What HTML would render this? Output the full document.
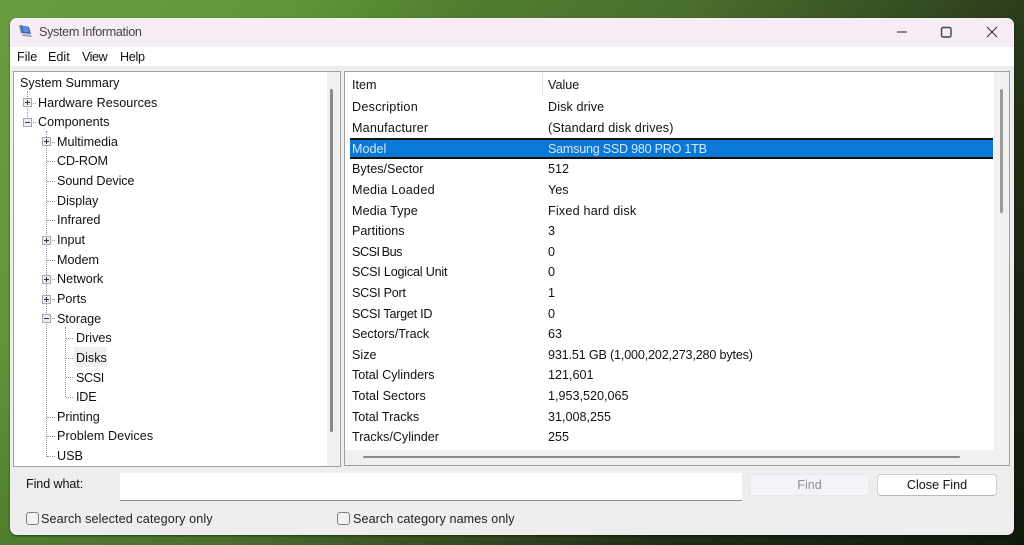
<!DOCTYPE html>
<html><head><meta charset="utf-8"><style>
html,body{margin:0;padding:0;width:1024px;height:545px;overflow:hidden}
body{position:relative;background:linear-gradient(131deg,#689e40 0%,#609538 20%,#4f7d2e 32%,#4a6f2e 46%,#2b3f1c 68%,#1f2d14 76%,#0f1a0c 100%);font-family:"Liberation Sans",sans-serif;font-size:12.6px;color:#111}
.a{position:absolute;white-space:nowrap}
.t{position:absolute;white-space:nowrap;line-height:16px;height:16px}
.hv{position:absolute;border-left:1px dotted #999;width:0}
.hh{position:absolute;border-top:1px dotted #999;height:0}
.ex{position:absolute;width:9px;height:9px;border:1px solid #a8a8b0;background:#eceef4;box-sizing:border-box}
.ex:before{content:"";position:absolute;left:1px;top:3px;width:5px;height:1px;background:#334}
.ex.p:after{content:"";position:absolute;left:3px;top:1px;width:1px;height:5px;background:#334}
.cb{position:absolute;width:13px;height:13px;border:1px solid #808080;border-radius:3px;background:#f3f3f3;box-sizing:border-box}
</style></head><body>
<div class="a" style="left:10px;top:18px;width:1004px;height:517px;background:#eeeeee;border-radius:7px;overflow:hidden;box-shadow:0 1px 2px rgba(0,0,0,.5)">
<div class="a" style="left:0;top:0;width:1004px;height:29px;background:#f6ecf6"></div>
<div class="a" style="left:0;top:29px;width:1004px;height:19px;background:#fff"></div>
</div>
<svg class="a" style="left:18px;top:23px" width="16" height="16" viewBox="0 0 16 16"><path d="M2 2l9 2 2 7-9-1z" fill="#3a5fb0"/><path d="M4 3l6 1.500 1.500 5-6-.8z" fill="#5b8fe0"/><path d="M4 11l9 1 1 2-9-1z" fill="#9aa0b0"/><path d="M1 3l1-1 2 8-1 1z" fill="#8d93a8"/></svg>
<div class="t" style="left:39px;top:24px;color:#444;letter-spacing:-.33px">System Information</div>
<svg class="a" style="left:890px;top:20px" width="120" height="24" viewBox="0 0 120 24"><path d="M7 12h10" stroke="#444" stroke-width="1.200"/><rect x="51.500" y="7.500" width="9.500" height="9.500" rx="1.500" fill="none" stroke="#444" stroke-width="1.400"/><path d="M97 7l10 10M107 7l-10 10" stroke="#333" stroke-width="1.100"/></svg>
<div class="t" style="left:17px;top:49px">File</div>
<div class="t" style="left:48px;top:49px">Edit</div>
<div class="t" style="left:82px;top:49px;letter-spacing:-.5px">View</div>
<div class="t" style="left:120px;top:49px;letter-spacing:-.3px">Help</div>

<div class="a" style="left:13px;top:71px;width:313px;height:394px;background:#fff;border:1px solid #a0a0a0;border-right:0"></div>
<div class="a" style="left:327px;top:71px;width:13px;height:395px;background:#f0f0f0;border-top:1px solid #a0a0a0;border-right:1px solid #a0a0a0"></div>
<div class="a" style="left:330px;top:89px;width:3px;height:343px;background:#8a8a8a;border-radius:2px"></div>
<div class="a" style="left:13px;top:466px;width:328px;height:1px;background:#a0a0a0"></div>

<div class="hv" style="left:27px;top:91px;height:32px"></div>
<div class="hv" style="left:46px;top:131px;height:326px"></div>
<div class="hv" style="left:65px;top:327px;height:70px"></div>
<div class="hh" style="left:31px;top:103px;width:5px"></div><div class="hh" style="left:31px;top:122px;width:5px"></div>
<div class="hh" style="left:50px;top:142px;width:5px"></div>
<div class="hh" style="left:47px;top:161px;width:8px"></div><div class="hh" style="left:47px;top:181px;width:8px"></div><div class="hh" style="left:47px;top:201px;width:8px"></div><div class="hh" style="left:47px;top:220px;width:8px"></div>
<div class="hh" style="left:50px;top:240px;width:5px"></div><div class="hh" style="left:47px;top:260px;width:8px"></div><div class="hh" style="left:50px;top:279px;width:5px"></div><div class="hh" style="left:50px;top:299px;width:5px"></div><div class="hh" style="left:50px;top:318px;width:5px"></div>
<div class="hh" style="left:66px;top:338px;width:7px"></div><div class="hh" style="left:66px;top:358px;width:7px"></div><div class="hh" style="left:66px;top:377px;width:7px"></div><div class="hh" style="left:66px;top:397px;width:7px"></div>
<div class="hh" style="left:47px;top:417px;width:8px"></div><div class="hh" style="left:47px;top:436px;width:8px"></div><div class="hh" style="left:47px;top:456px;width:8px"></div>
<div class="ex p" style="left:23px;top:98px"></div><div class="ex" style="left:23px;top:118px"></div>
<div class="ex p" style="left:42px;top:137px"></div><div class="ex p" style="left:42px;top:236px"></div><div class="ex p" style="left:42px;top:275px"></div><div class="ex p" style="left:42px;top:295px"></div><div class="ex" style="left:42px;top:314px"></div>
<div class="a" style="left:74px;top:347px;width:33px;height:20px;background:#f0f0f0"></div>

<div class="t" style="left:20px;top:75px">System Summary</div>
<div class="t" style="left:38px;top:95px;letter-spacing:.06px">Hardware Resources</div>
<div class="t" style="left:38px;top:114px">Components</div>
<div class="t" style="left:57px;top:134px">Multimedia</div>
<div class="t" style="left:57px;top:153px;letter-spacing:-.15px">CD-ROM</div>
<div class="t" style="left:57px;top:173px;letter-spacing:-.08px">Sound Device</div>
<div class="t" style="left:57px;top:193px">Display</div>
<div class="t" style="left:57px;top:212px">Infrared</div>
<div class="t" style="left:57px;top:232px">Input</div>
<div class="t" style="left:57px;top:252px">Modem</div>
<div class="t" style="left:57px;top:271px">Network</div>
<div class="t" style="left:57px;top:291px">Ports</div>
<div class="t" style="left:57px;top:311px">Storage</div>
<div class="t" style="left:76px;top:330px">Drives</div>
<div class="t" style="left:76px;top:350px">Disks</div>
<div class="t" style="left:76px;top:370px;letter-spacing:-.4px">SCSI</div>
<div class="t" style="left:76px;top:389px;letter-spacing:-.2px">IDE</div>
<div class="t" style="left:57px;top:409px">Printing</div>
<div class="t" style="left:57px;top:428px;letter-spacing:.07px">Problem Devices</div>
<div class="t" style="left:57px;top:448px">USB</div>

<div class="a" style="left:344px;top:71px;width:649px;height:379px;background:#fff;border-top:1px solid #a0a0a0;border-left:1px solid #a0a0a0"></div>
<div class="a" style="left:994px;top:71px;width:16px;height:395px;background:#f0f0f0;border-top:1px solid #a0a0a0;border-right:1px solid #a0a0a0;box-sizing:border-box"></div>
<div class="a" style="left:344px;top:450px;width:666px;height:16px;background:#f0f0f0;border-left:1px solid #a0a0a0;border-bottom:1px solid #a0a0a0;border-right:1px solid #a0a0a0;box-sizing:border-box"></div>
<div class="a" style="left:1000px;top:89px;width:3px;height:124px;background:#9a9a9a;border-radius:2px"></div>
<div class="a" style="left:363px;top:456px;width:597px;height:2px;background:#8a8a8a;border-radius:1px"></div>
<div class="a" style="left:542px;top:72px;width:1px;height:24px;background:#e5e5e5"></div>
<div class="a" style="left:350px;top:138px;width:643px;height:21px;background:#0a78d7;border-top:2px solid #111;border-bottom:2px solid #111;box-sizing:border-box"></div>

<div class="t" style="left:352px;top:77px">Item</div><div class="t" style="left:548px;top:77px">Value</div>
<div class="t" style="left:352px;top:99px;letter-spacing:.27px">Description</div><div class="t" style="left:548px;top:99px;letter-spacing:.1px">Disk drive</div>
<div class="t" style="left:352px;top:120px;letter-spacing:.17px">Manufacturer</div><div class="t" style="left:548px;top:120px;letter-spacing:.14px">(Standard disk drives)</div>
<div class="t" style="left:352px;top:141px;color:#d5e8fa">Model</div><div class="t" style="left:548px;top:141px;color:#d5e8fa;letter-spacing:-.25px">Samsung SSD 980 PRO 1TB</div>
<div class="t" style="left:352px;top:161px">Bytes/Sector</div><div class="t" style="left:548px;top:161px">512</div>
<div class="t" style="left:352px;top:182px;letter-spacing:.25px">Media Loaded</div><div class="t" style="left:548px;top:182px">Yes</div>
<div class="t" style="left:352px;top:203px;letter-spacing:.1px">Media Type</div><div class="t" style="left:548px;top:203px;letter-spacing:.2px">Fixed hard disk</div>
<div class="t" style="left:352px;top:223px">Partitions</div><div class="t" style="left:548px;top:223px">3</div>
<div class="t" style="left:352px;top:244px;letter-spacing:-.45px;word-spacing:-1px">SCSI Bus</div><div class="t" style="left:548px;top:244px">0</div>
<div class="t" style="left:352px;top:264px;letter-spacing:-.2px">SCSI Logical Unit</div><div class="t" style="left:548px;top:264px">0</div>
<div class="t" style="left:352px;top:285px;letter-spacing:-.25px">SCSI Port</div><div class="t" style="left:548px;top:285px">1</div>
<div class="t" style="left:352px;top:306px;letter-spacing:-.25px">SCSI Target ID</div><div class="t" style="left:548px;top:306px">0</div>
<div class="t" style="left:352px;top:326px">Sectors/Track</div><div class="t" style="left:548px;top:326px">63</div>
<div class="t" style="left:352px;top:347px">Size</div><div class="t" style="left:548px;top:347px;letter-spacing:-.17px">931.51 GB (1,000,202,273,280 bytes)</div>
<div class="t" style="left:352px;top:367px">Total Cylinders</div><div class="t" style="left:548px;top:367px">121,601</div>
<div class="t" style="left:352px;top:388px;letter-spacing:.08px">Total Sectors</div><div class="t" style="left:548px;top:388px">1,953,520,065</div>
<div class="t" style="left:352px;top:409px">Total Tracks</div><div class="t" style="left:548px;top:409px">31,008,255</div>
<div class="t" style="left:352px;top:429px">Tracks/Cylinder</div><div class="t" style="left:548px;top:429px">255</div>

<div class="t" style="left:26px;top:476px;letter-spacing:-.1px">Find what:</div>
<div class="a" style="left:120px;top:473px;width:622px;height:28px;background:#fff;border-bottom:1px solid #8a8a8a;box-sizing:border-box"></div>
<div class="a" style="left:749px;top:474px;width:121px;height:22px;background:#f3f4f8;border:1px solid #e8e8ec;border-radius:4px;box-sizing:border-box;text-align:center;line-height:21px;color:#8f8f8f">Find</div>
<div class="a" style="left:877px;top:474px;width:120px;height:22px;background:#fff;border:1px solid #d0d0d0;border-bottom-color:#b8b8b8;border-radius:4px;box-sizing:border-box;text-align:center;line-height:21px;color:#111">Close Find</div>
<div class="cb" style="left:26px;top:512px"></div>
<div class="t" style="left:41px;top:511px;letter-spacing:.1px;color:#222">Search selected category only</div>
<div class="cb" style="left:337px;top:512px"></div>
<div class="t" style="left:353px;top:511px;letter-spacing:.08px;color:#222">Search category names only</div>
</body></html>
